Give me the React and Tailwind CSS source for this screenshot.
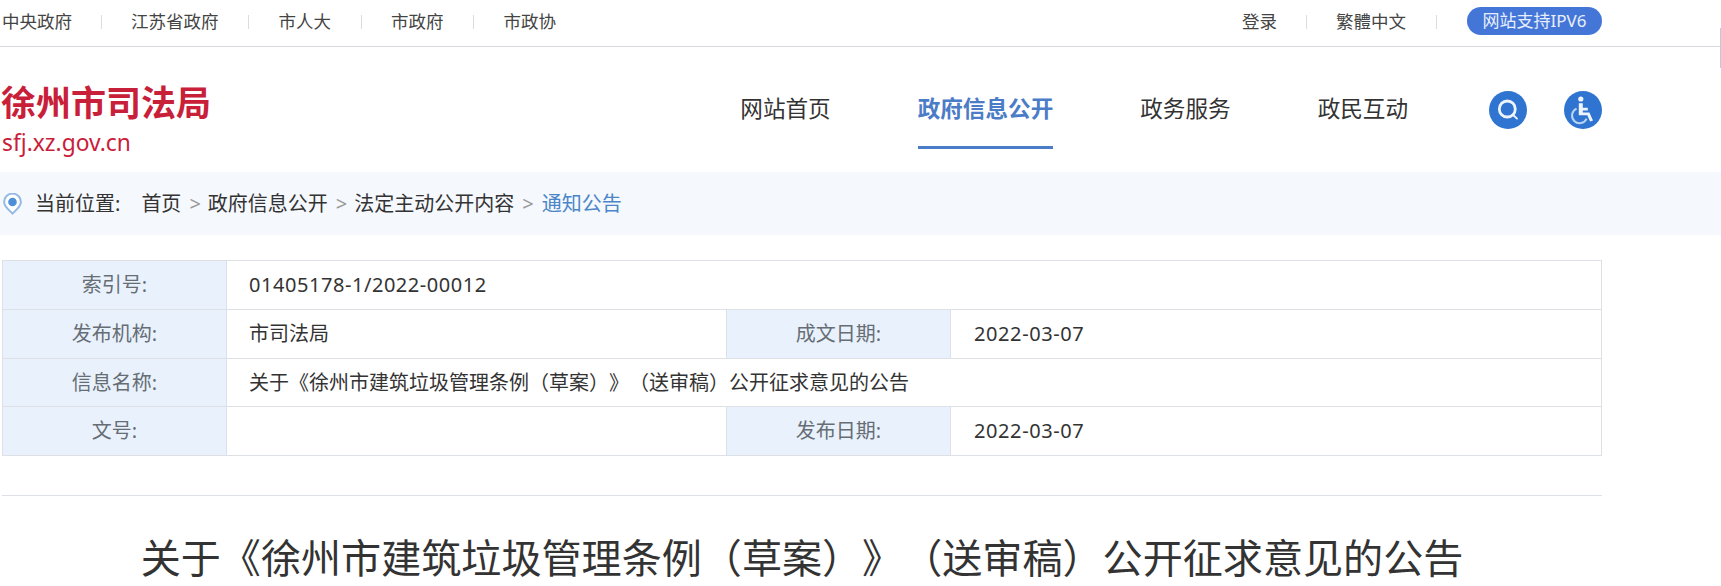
import React from "react";

const font = { fontFamily: '"Noto Sans","Noto Sans CJK SC",sans-serif' };

const Label = ({ children, cls = "" }) => (
  <div className={"flex items-center justify-center bg-[#e9f2fc] text-[#666d75] border-[#d9e2ec] " + cls}>{children}</div>
);
const Val = ({ children, cls = "" }) => (
  <div className={"flex items-center text-[#333] bg-white " + cls}>{children}</div>
);

export default function App() {
  const top = ["中央政府", "江苏省政府", "市人大", "市政府", "市政协"];
  const nav = ["网站首页", "政府信息公开", "政务服务", "政民互动"];
  return (
    <div className="relative w-[1721px] h-[586px] overflow-hidden bg-white text-[#333] [text-spacing-trim:space-all]" style={font}>
      {/* page edge mark */}
      <div className="absolute right-0 top-[28px] w-px h-[40px] bg-[#c8c8d0]" />

      {/* top bar */}
      <div className="h-[47px] border-b border-[#d6d8e2]">
        <div className="w-[1600px] ml-[2px] h-[46px] flex items-center justify-between text-[17.5px] text-[#444]">
          <div className="flex items-center -mt-[3px]">
            {top.map((t, i) => (
              <React.Fragment key={t}>
                {i > 0 && <span className={"w-px h-[14px] bg-[#dcdcdc] " + (i === 1 ? "mx-[29px]" : "mx-[29.5px]")} />}
                <span>{t}</span>
              </React.Fragment>
            ))}
          </div>
          <div className="flex items-center -mt-[3px]">
            <span>登录</span>
            <span className="w-px h-[14px] bg-[#dcdcdc] mx-[29px]" />
            <span>繁體中文</span>
            <span className="w-px h-[14px] bg-[#dcdcdc] mx-[30px]" />
            <span className="w-[135px] h-[28px] rounded-full bg-[#4476d8] text-[#e8effc] text-[17px] flex items-center justify-center -mt-[2px]">网站支持IPV6</span>
          </div>
        </div>
      </div>

      {/* header */}
      <div className="h-[125px] w-[1600px] ml-[2px] flex items-start justify-between">
        <div className="pt-[37px]">
          <div className="text-[35px] leading-[38px] font-bold text-[#c9203a] -ml-[1px]">徐州市司法局</div>
          <div className="text-[22.8px] leading-[30px] mt-[6px] text-[#c9203a]">sfj.xz.gov.cn</div>
        </div>
        <div className="flex items-start">
          <nav className="flex gap-[87px] text-[22.6px] text-[#333] mr-[81px]">
            {nav.map((n, i) => (
              <div key={n} className={"h-[102px] flex items-center pt-[25px] border-b-[3px] " + (i === 1 ? "font-bold text-[#4a7cc7] border-[#4a7cc7]" : "border-transparent")}>
                {n}
              </div>
            ))}
          </nav>
          <div className="flex gap-[37px] pt-[44px]">
            <span className="w-[38px] h-[38px] rounded-full bg-[#2f74d0]">
              <svg width="38" height="38" viewBox="0 0 38 38" fill="none" stroke="#eef4fc" strokeLinecap="round">
                <circle cx="18.3" cy="18" r="8" strokeWidth="2.8" />
                <path d="M24.2 24 28 27.6" strokeWidth="1.9" />
              </svg>
            </span>
            <span className="w-[38px] h-[38px] rounded-full bg-[#2f74d0]">
              <svg width="38" height="38" viewBox="0 0 38 38" fill="none">
                <circle cx="16.8" cy="8" r="2.6" fill="#eef4fc" />
                <path d="M14.8 12.2h4v4.6h5v2.6h-5v2h6.6l3.6 8-2.9 1.1-2.8-6.3h-8.5z" fill="#eef4fc" />
                <path d="M12.6 17.6a7.6 7.6 0 1 0 10 10" stroke="#b9d3f2" strokeWidth="2" />
              </svg>
            </span>
          </div>
        </div>
      </div>

      {/* breadcrumb */}
      <div className="h-[63px] bg-[#f5f8fc] flex items-center pl-[3px] text-[20px] text-[#333]">
        <svg width="19" height="22" viewBox="0 0 19 22" className="mr-[13px]" fill="none">
          <path d="M9.5 20.6C6 17 1.1 13.6 1.1 9a8.4 8.4 0 0 1 16.8 0C17.9 13.6 13 17 9.5 20.6z" stroke="#93b9e4" strokeWidth="2" fill="#fff" />
          <circle cx="9.5" cy="9" r="4.3" fill="#4f8fd8" />
        </svg>
        <div className="flex items-center mt-[1px]">
          <span>当前位置:</span>
          <span className="ml-[21px]">首页</span>
          <span className="ml-[8px] mr-[7px] text-[#999]">&gt;</span>
          <span>政府信息公开</span>
          <span className="ml-[8px] mr-[7px] text-[#999]">&gt;</span>
          <span>法定主动公开内容</span>
          <span className="mx-[8px] text-[#999]">&gt;</span>
          <span className="text-[#4a86c8]">通知公告</span>
        </div>
      </div>

      {/* table */}
      <div className="w-[1600px] ml-[2px] mt-[25px] border border-[#dde1e6] text-[20px] grid grid-cols-[224px_499px_225px_1fr] grid-rows-[48px_48px_47px_48px] gap-y-px bg-[#dde1e6]">
        <Label cls="border-r">索引号:</Label>
        <Val cls="col-span-3 pl-[22px] tracking-[0.55px]">01405178-1/2022-00012</Val>
        <Label cls="border-r">发布机构:</Label>
        <Val cls="pl-[22px]">市司法局</Val>
        <Label cls="border-x">成文日期:</Label>
        <Val cls="pl-[23px] tracking-[0.6px]">2022-03-07</Val>
        <Label cls="border-r">信息名称:</Label>
        <Val cls="col-span-3 pl-[22px]">关于《徐州市建筑垃圾管理条例（草案）》（送审稿）公开征求意见的公告</Val>
        <Label cls="border-r">文号:</Label>
        <Val />
        <Label cls="border-x">发布日期:</Label>
        <Val cls="pl-[23px] tracking-[0.6px]">2022-03-07</Val>
      </div>

      {/* divider */}
      <div className="w-[1600px] ml-[2px] mt-[39px] border-t border-[#dde1e6]" />

      {/* title */}
      <h1 className="w-[1604px] mt-[32px] text-center text-[40.1px] leading-[60px] font-normal text-[#333]">
        关于《徐州市建筑垃圾管理条例（草案）》（送审稿）公开征求意见的公告
      </h1>
    </div>
  );
}
